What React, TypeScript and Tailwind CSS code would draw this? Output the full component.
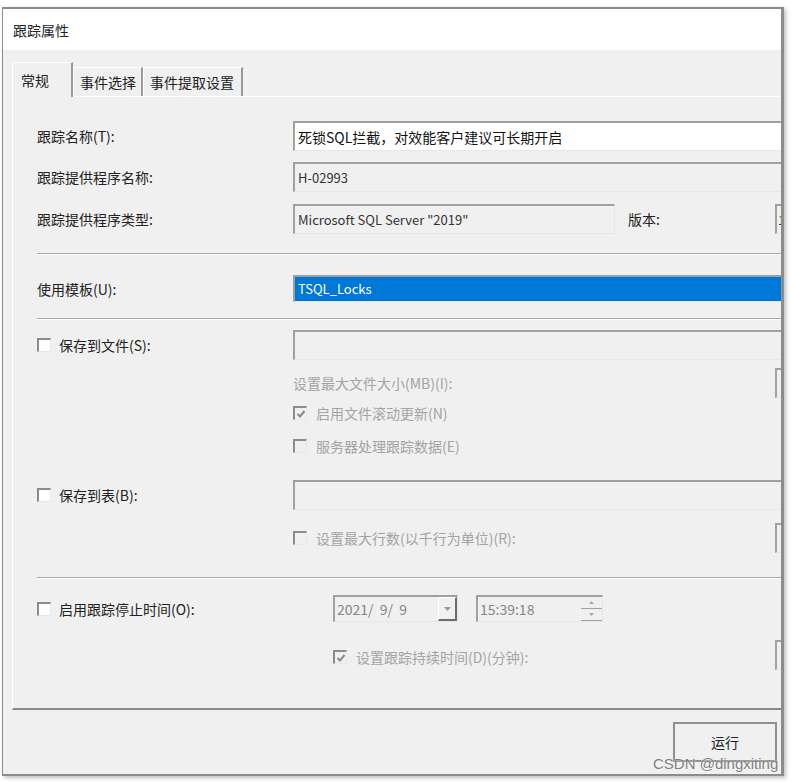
import React from "react";

const sunken =
  "border-t-2 border-l-2 border-b border-r border-t-[#a0a0a0] border-l-[#a0a0a0] border-b-[#e6e6e6] border-r-[#e6e6e6]";

function Check({ checked = false, disabled = false }: { checked?: boolean; disabled?: boolean }) {
  return (
    <span
      className={`w-[14px] h-[14px] shrink-0 flex items-center justify-center border-t-2 border-l-2 border-b border-r border-t-[#8c8c8c] border-l-[#8c8c8c] border-b-[#e8e8e8] border-r-[#e8e8e8] ${
        disabled ? "bg-[#f0f0f0]" : "bg-white"
      }`}
    >
      {checked && (
        <svg width="10" height="10" viewBox="0 0 10 10">
          <path d="M1.5 5 L4 7.5 L8.5 2" fill="none" stroke="#8a8a8a" strokeWidth="2" />
        </svg>
      )}
    </span>
  );
}

function Sep() {
  return <div className="h-[2px] border-t border-t-[#a8a8a8] border-b border-b-white" />;
}

function Label({ children }: { children: React.ReactNode }) {
  return <div className="w-[256px] shrink-0 flex items-center text-[14px] leading-[18px] text-[#222]">{children}</div>;
}

function SmallBox() {
  return <div className={`w-[60px] h-[30px] shrink-0 bg-[#f0f0f0] ${sunken}`} />;
}

export default function App() {
  return (
    <div className="min-h-[782px] bg-white pt-[7px] pl-[2px] font-['Noto_Sans_CJK_SC','Noto_Sans',sans-serif]">
      <div className="relative w-[782px] h-[769px] border-t-2 border-l border-b-2 border-r-[3px] border-[#8c8c8c] shadow-[2px_2px_4px_rgba(0,0,0,0.25)] overflow-hidden flex flex-col bg-[#f0f0f0]">
        {/* title bar */}
        <div className="h-[41px] shrink-0 bg-white flex items-center pl-[10px] text-[14px] leading-[18px] text-[#222]">
          跟踪属性
        </div>

        {/* tabs */}
        <div className="h-[46px] shrink-0 flex items-end pl-[9px] text-[14px] leading-[18px] text-[#222]">
          <div className="relative z-10 -mb-px h-[35px] w-[61px] flex items-center pl-[8px] bg-[#f0f0f0] border-t border-l border-white border-r-2 border-r-[#9a9a9a]">
            常规
          </div>
          <div className="h-[29px] w-[70px] flex items-center pl-[6px] border-t border-l border-white border-r-2 border-r-[#9a9a9a]">
            事件选择
          </div>
          <div className="h-[29px] w-[100px] flex items-center pl-[6px] border-t border-l border-white border-r-2 border-r-[#9a9a9a]">
            事件提取设置
          </div>
        </div>

        {/* panel */}
        <div className="ml-[9px] w-[900px] h-[614px] shrink-0 border-t border-l border-white border-b-2 border-b-[#8a8a8a] pl-[24px] pt-[24px] flex flex-col">
          <div className="h-[30px] flex">
            <Label>跟踪名称(T):</Label>
            <div className={`w-[600px] h-full bg-white flex items-center pl-[3px] text-[14px] leading-[18px] text-[#111] ${sunken}`}>
              死锁SQL拦截，对效能客户建议可长期开启
            </div>
          </div>

          <div className="mt-[11px] h-[30px] flex">
            <Label>跟踪提供程序名称:</Label>
            <div className={`w-[600px] h-full bg-[#f0f0f0] flex items-center pl-[3px] text-[13px] leading-[18px] text-[#333] ${sunken}`}>
              H-02993
            </div>
          </div>

          <div className="mt-[12px] h-[30px] flex">
            <Label>跟踪提供程序类型:</Label>
            <div className="w-[482px] flex items-center">
              <div className={`w-[322px] h-full bg-[#f0f0f0] flex items-center pl-[3px] text-[13px] leading-[18px] text-[#333] ${sunken}`}>
                Microsoft SQL Server "2019"
              </div>
              <span className="ml-[13px] text-[14px] leading-[18px] text-[#222]">版本:</span>
            </div>
            <div className={`w-[60px] h-full bg-[#f0f0f0] flex items-center pl-[1px] text-[12px] leading-[18px] text-[#333] ${sunken}`}>
              1
            </div>
          </div>

          <div className="mt-[19px]">
            <Sep />
          </div>

          <div className="mt-[20px] h-[27px] flex">
            <Label>使用模板(U):</Label>
            <div className="w-[600px] h-full border-t-2 border-l-2 border-t-[#a0a0a0] border-l-[#a0a0a0] border-b border-b-[#e6e6e6] bg-[#0078d7] flex items-center pl-[3px] text-[13px] leading-[18px] text-white">
              TSQL_Locks
            </div>
          </div>

          <div className="mt-[16px]">
            <Sep />
          </div>

          <div className="mt-[10px] h-[30px] flex">
            <Label>
              <span className="flex items-center gap-[8px]">
                <Check />
                保存到文件(S):
              </span>
            </Label>
            <div className={`w-[600px] h-full bg-[#f0f0f0] ${sunken}`} />
          </div>

          <div className="mt-[8px] h-[30px] flex">
            <div className="w-[256px] shrink-0" />
            <div className="w-[482px] flex items-center text-[14px] leading-[18px] text-[#a3a3a3]">设置最大文件大小(MB)(I):</div>
            <SmallBox />
          </div>

          <div className="mt-[5px] h-[20px] flex">
            <div className="w-[256px] shrink-0" />
            <div className="flex items-center gap-[9px] text-[14px] leading-[18px] text-[#a3a3a3]">
              <Check checked disabled />
              启用文件滚动更新(N)
            </div>
          </div>

          <div className="mt-[13px] h-[20px] flex">
            <div className="w-[256px] shrink-0" />
            <div className="flex items-center gap-[9px] text-[14px] leading-[18px] text-[#a3a3a3]">
              <Check disabled />
              服务器处理跟踪数据(E)
            </div>
          </div>

          <div className="mt-[24px] h-[30px] flex">
            <Label>
              <span className="flex items-center gap-[8px]">
                <Check />
                保存到表(B):
              </span>
            </Label>
            <div className={`w-[600px] h-full bg-[#f0f0f0] ${sunken}`} />
          </div>

          <div className="mt-[13px] h-[30px] flex">
            <div className="w-[256px] shrink-0" />
            <div className="w-[482px] flex items-center gap-[9px] text-[14px] leading-[18px] text-[#a3a3a3]">
              <Check disabled />
              设置最大行数(以千行为单位)(R):
            </div>
            <SmallBox />
          </div>

          <div className="mt-[24px]">
            <Sep />
          </div>

          <div className="mt-[16px] h-[27px] flex">
            <Label>
              <span className="flex items-center gap-[8px]">
                <Check />
                启用跟踪停止时间(O):
              </span>
            </Label>
            <div className="ml-[40px] flex items-center">
              <div className={`w-[125px] h-[27px] bg-[#f0f0f0] flex items-center ${sunken}`}>
                <span className="flex-1 pl-[2px] whitespace-pre text-[14px] leading-[18px] text-[#858585]">2021/  9/  9</span>
                <div className="w-[19px] h-full border-t border-l border-white border-b-2 border-r-2 border-b-[#6d6d6d] border-r-[#6d6d6d] flex items-center justify-center">
                  <svg width="7" height="4" viewBox="0 0 7 4">
                    <path d="M0 0 H7 L3.5 4 Z" fill="#9a9a9a" />
                  </svg>
                </div>
              </div>
              <div className={`ml-[18px] w-[127px] h-[27px] bg-[#f0f0f0] flex items-center ${sunken}`}>
                <span className="flex-1 pl-[2px] text-[14px] leading-[18px] text-[#858585]">15:39:18</span>
                <div className="w-[21px] h-full flex flex-col">
                  <div className="flex-1 border-b border-[#a0a0a0] flex items-center justify-center">
                    <svg width="5" height="3" viewBox="0 0 5 3">
                      <path d="M0 3 H5 L2.5 0 Z" fill="#a8a8a8" />
                    </svg>
                  </div>
                  <div className="flex-1 border-b border-[#a0a0a0] flex items-center justify-center">
                    <svg width="5" height="3" viewBox="0 0 5 3">
                      <path d="M0 0 H5 L2.5 3 Z" fill="#a8a8a8" />
                    </svg>
                  </div>
                </div>
              </div>
            </div>
          </div>

          <div className="mt-[18px] h-[30px] flex">
            <div className="w-[256px] shrink-0" />
            <div className="w-[482px] pl-[40px] pt-[4px] flex items-center gap-[9px] text-[14px] leading-[18px] text-[#a3a3a3]">
              <Check checked disabled />
              设置跟踪持续时间(D)(分钟):
            </div>
            <SmallBox />
          </div>
        </div>

        {/* footer */}
        <div className="flex justify-end pr-[4px] pt-[12px]">
          <div className="w-[104px] h-[40px] border-2 border-[#8f8f8f] bg-[#f0f0f0] flex items-center justify-center text-[14px] leading-[18px] text-[#222]">
            运行
          </div>
        </div>

        <div className="absolute left-[650px] top-[746px] text-[15px] leading-[18px] text-[#808080] font-['Liberation_Sans',sans-serif] [text-shadow:0_0_2px_#fff]">
          CSDN @dingxiting
        </div>
      </div>
    </div>
  );
}
